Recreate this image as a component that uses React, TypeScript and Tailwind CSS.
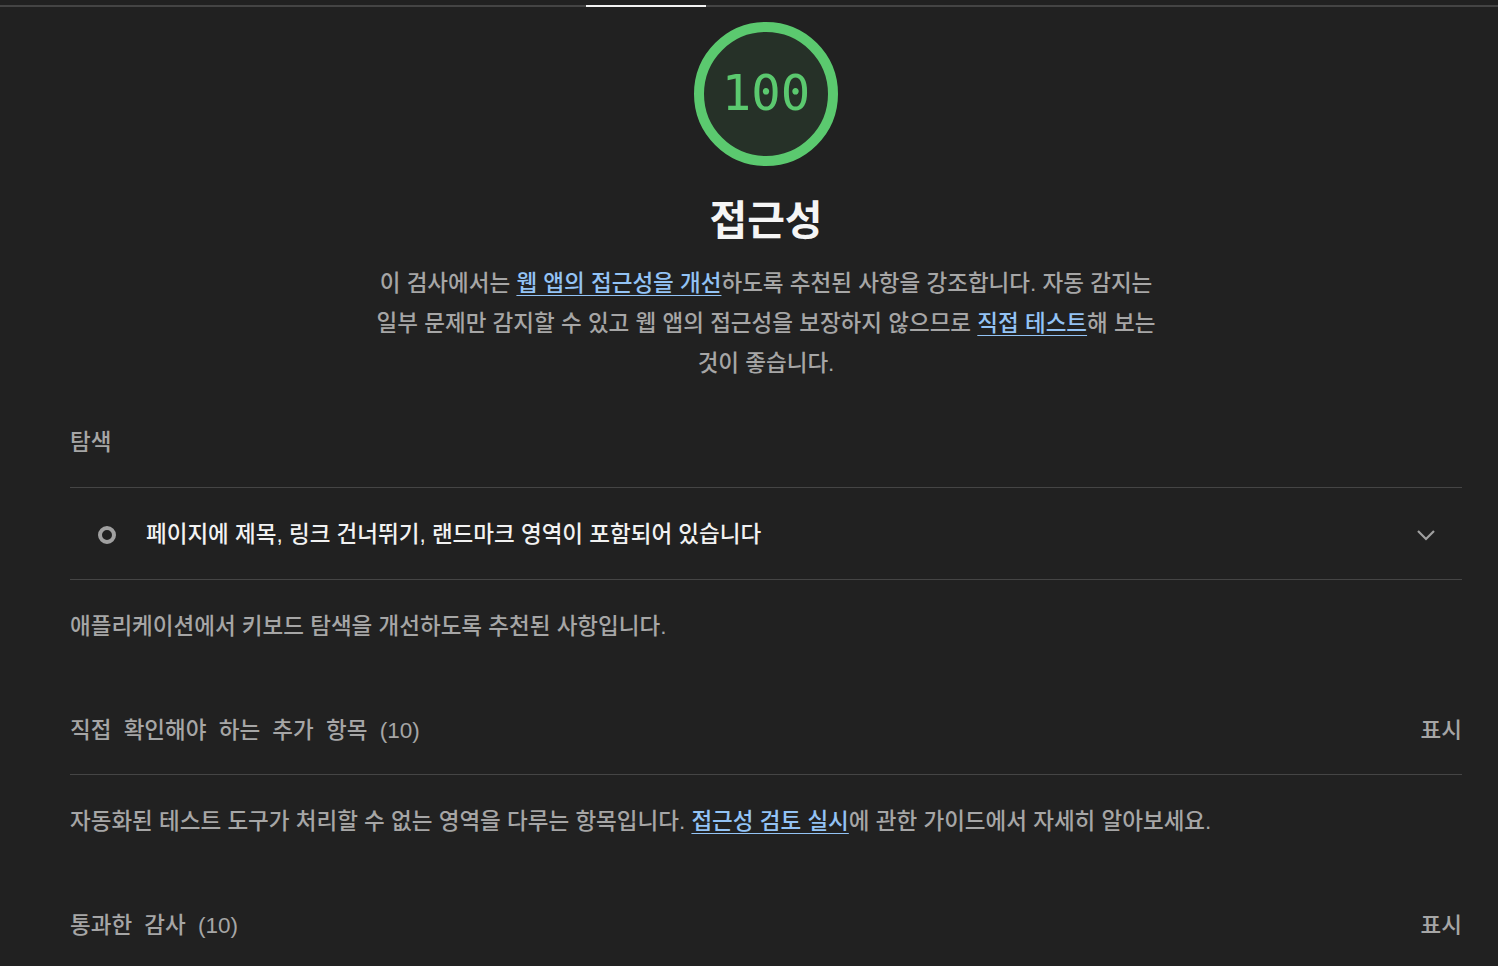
const FONT = '"Liberation Sans", "Noto Sans CJK KR", sans-serif'

function Gauge() {
  return (
    <div className="relative w-[144px] h-[144px]">
      <svg width="144" height="144" viewBox="0 0 144 144">
        <circle cx="72" cy="72" r="67" fill="#263128" stroke="#5bc96f" strokeWidth="10" />
      </svg>
      <div className="absolute inset-0 flex items-center justify-center text-[49px] text-[#5bc96f] font-['DejaVu_Sans_Mono',monospace]">
        100
      </div>
    </div>
  )
}

function Link({ children }: { children: React.ReactNode }) {
  return <a className="text-[#93c3f5] underline underline-offset-[4px] decoration-1">{children}</a>
}

function ClumpHeader({ title, last }: { title: string; last?: boolean }) {
  return (
    <div
      className={
        'mt-[40px] flex items-center justify-between h-[88px] text-[22.5px] font-medium text-[#a6a6a6] ' +
        (last ? '' : 'border-b border-[#454545]')
      }
    >
      <span className="[word-spacing:6px]">{title}</span>
      <span>표시</span>
    </div>
  )
}

export default function App() {
  return (
    <div className="h-[966px] bg-[#212121] overflow-hidden" style={{ fontFamily: FONT }}>
      {/* tab underline */}
      <div className="pt-[5px] flex h-[8px]">
        <div className="w-[586px] h-[2px] bg-[#444444]" />
        <div className="w-[120px] h-[2px] bg-[#f2f2f2]" />
        <div className="flex-1 h-[2px] bg-[#444444]" />
      </div>

      <div className="pl-[70px] pr-[36px]">
        <div className="flex flex-col items-center pt-[14px]">
          <Gauge />
          <h1 className="mt-[27px] text-[41px] leading-[56px] font-bold text-[#f5f5f5]">접근성</h1>
          <p className="mt-[15px] text-center text-[22.5px] leading-[40px] font-medium text-[#a6a6a6]">
            이 검사에서는 <Link>웹 앱의 접근성을 개선</Link>하도록 추천된 사항을 강조합니다. 자동 감지는
            <br />
            일부 문제만 감지할 수 있고 웹 앱의 접근성을 보장하지 않으므로 <Link>직접 테스트</Link>해 보는
            <br />
            것이 좋습니다.
          </p>
        </div>

        <div className="mt-[39px] text-[22.5px] leading-[40px] font-medium text-[#a6a6a6] pb-[24px] border-b border-[#454545]">
          탐색
        </div>

        <div className="flex items-center h-[92px] pt-[2px] border-b border-[#454545] pl-[28px] pr-[26px]">
          <span className="w-[18px] h-[18px] rounded-full border-[4px] border-[#a0a0a0]" />
          <span className="ml-[30px] flex-1 text-[22.5px] font-medium text-[#f2f2f2]">
            페이지에 제목, 링크 건너뛰기, 랜드마크 영역이 포함되어 있습니다
          </span>
          <svg width="20" height="12" viewBox="0 0 20 12" fill="none">
            <path d="M2 2l8 8 8-8" stroke="#a0a0a0" strokeWidth="2.2" />
          </svg>
        </div>

        <div className="pt-[27px] text-[22.5px] leading-[40px] font-medium text-[#a6a6a6]">
          애플리케이션에서 키보드 탐색을 개선하도록 추천된 사항입니다.
        </div>

        <ClumpHeader title="직접 확인해야 하는 추가 항목 (10)" />
        <div className="pt-[27px] text-[22.5px] leading-[40px] font-medium text-[#a6a6a6]">
          자동화된 테스트 도구가 처리할 수 없는 영역을 다루는 항목입니다. <Link>접근성 검토 실시</Link>에 관한 가이드에서
          자세히 알아보세요.
        </div>

        <ClumpHeader title="통과한 감사 (10)" last />
      </div>
    </div>
  )
}
